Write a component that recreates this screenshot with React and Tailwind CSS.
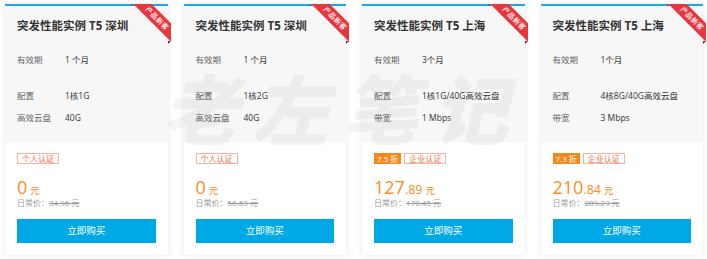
import React from "react";

const cards = [
  {
    title: "突发性能实例 T5 深圳",
    rows: [
      ["有效期", "1 个月"],
      ["配置", "1核1G"],
      ["高效云盘", "40G"],
    ],
    discount: null,
    badge: "个人认证",
    int: "0",
    dec: "",
    orig: "34.96",
  },
  {
    title: "突发性能实例 T5 深圳",
    rows: [
      ["有效期", "1 个月"],
      ["配置", "1核2G"],
      ["高效云盘", "40G"],
    ],
    discount: null,
    badge: "个人认证",
    int: "0",
    dec: "",
    orig: "56.63",
  },
  {
    title: "突发性能实例 T5 上海",
    rows: [
      ["有效期", "3个月"],
      ["配置", "1核1G/40G高效云盘"],
      ["带宽", "1 Mbps"],
    ],
    discount: "7.5 折",
    badge: "企业认证",
    int: "127",
    dec: ".89",
    orig: "170.45",
  },
  {
    title: "突发性能实例 T5 上海",
    rows: [
      ["有效期", "1个月"],
      ["配置", "4核8G/40G高效云盘"],
      ["带宽", "3 Mbps"],
    ],
    discount: "7.3 折",
    badge: "企业认证",
    int: "210",
    dec: ".84",
    orig: "289.23",
  },
];

function Ribbon() {
  return (
    <div className="absolute right-[-3px] top-[-2px] w-[44px] h-[44px] overflow-hidden pointer-events-none">
      <div className="absolute left-[-5px] top-[8px] w-[70px] h-[13px] rotate-45 bg-[#e8363f] flex items-center justify-center">
        <span className="text-white text-[7px] leading-none font-medium tracking-[0.5px]">产品新客</span>
      </div>
      <div className="absolute right-0 bottom-[4px] w-0 h-0 border-l-[3px] border-l-[#a51c22] border-b-[3px] border-b-transparent"></div>
      <div className="absolute left-[4px] top-0 w-0 h-0 border-b-[2px] border-b-[#a51c22] border-l-[2px] border-l-transparent"></div>
    </div>
  );
}

function Card({ c }) {
  return (
    <div className="relative flex flex-col bg-white border-t-2 border-[#1ea8e3] shadow-[0_0_6px_rgba(0,0,0,0.09)]">
      <Ribbon />
      <div className="bg-[#f7f7f7] px-3 pt-[12px] pb-[17px]">
        <div className="text-[11.5px] leading-[16px] font-bold text-[#333] whitespace-nowrap">
          {c.title}
        </div>
        <div className="mt-[19px] flex flex-col text-[8.5px] leading-[14px]">
          {c.rows.map(([k, v], i) => (
            <div
              key={i}
              className={
                "flex " + (i === 1 ? "mt-[22px]" : i === 2 ? "mt-[8px]" : "")
              }
            >
              <span className="w-[48px] shrink-0 text-[#666]">{k}</span>
              <span className="text-[#333] whitespace-nowrap">{v}</span>
            </div>
          ))}
        </div>
      </div>
      <div className="px-3 pt-[11px] pb-[12px] flex flex-col">
        <div className="flex items-center gap-[3px] h-[11px]">
          {c.discount && (
            <span className="h-[11px] px-[3px] bg-[#f6891c] text-white text-[8px] leading-[11px]">
              {c.discount}
            </span>
          )}
          <span className="h-[11px] px-[4px] border border-[#f8b39a] text-[#ec6a3f] text-[8px] leading-[9px] flex items-center">
            {c.badge}
          </span>
        </div>
        <div className="mt-[13px] h-[20px] flex items-baseline text-[#f98e1d] whitespace-nowrap">
          <span className="text-[18px] leading-[20px]">{c.int}</span>
          {c.dec && <span className="text-[12.5px] leading-[20px]">{c.dec}</span>}
          <span className="text-[9.5px] leading-[20px] ml-[3px]">元</span>
        </div>
        <div className="h-[12px] text-[8px] leading-[12px] text-[#999] whitespace-nowrap">
          日常价：<span className="line-through">{c.orig} 元</span>
        </div>
        <button className="mt-[10px] h-[24px] w-full bg-[#00a8e6] text-white text-[9.5px] leading-[24px] text-center">
          立即购买
        </button>
      </div>
    </div>
  );
}

export default function App() {
  return (
    <div
      className="relative w-[707px] h-[259px] bg-white overflow-hidden"
      style={{ fontFamily: '"Open Sans","Noto Sans CJK SC",sans-serif' }}
    >
      <div className="grid grid-cols-4 gap-4 pl-[5px] pr-[4px] pt-[4px]">
        {cards.map((c, i) => (
          <Card key={i} c={c} />
        ))}
      </div>
      <div className="absolute left-[162px] top-[70px] pointer-events-none text-[76px] leading-[80px] font-black italic tracking-[14px] text-black/[0.045] whitespace-nowrap">
        老左笔记
      </div>
    </div>
  );
}
